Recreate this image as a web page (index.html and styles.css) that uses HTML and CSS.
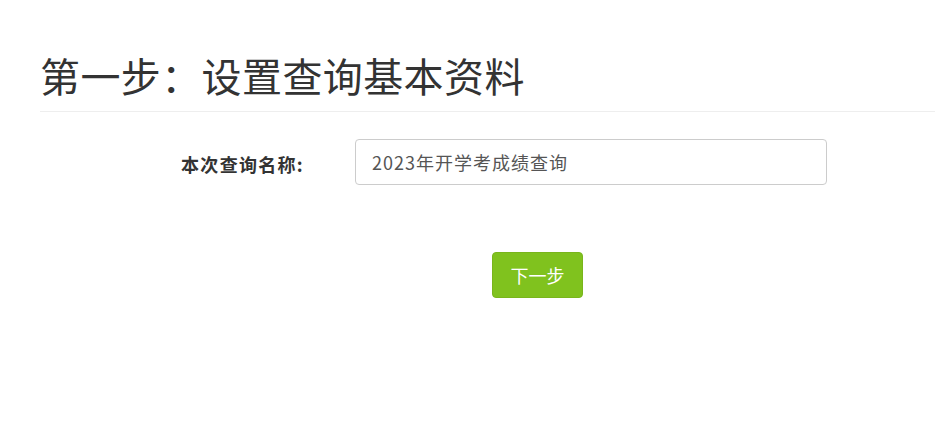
FILE: index.html
```html
<!DOCTYPE html>
<html lang="zh-CN">
<head>
<meta charset="utf-8">
<title>设置查询基本资料</title>
<link rel="stylesheet" href="styles.css">
</head>
<body>
<div class="page">
  <h1 class="title">第一步：设置查询基本资料</h1>
  <form class="form">
    <div class="row">
      <label class="label" for="name">本次查询名称:</label>
      <input class="input" id="name" type="text" value="2023年开学考成绩查询">
    </div>
    <div class="actions">
      <button type="button" class="btn">下一步</button>
    </div>
  </form>
</div>
</body>
</html>
```

FILE: styles.css
```css
html, body {
  margin: 0;
  padding: 0;
  background: #fff;
}
body {
  font-family: "Noto Sans CJK SC", "Noto Sans", sans-serif;
  color: #333;
}
.page {
  padding: 0 0 0 40px;
}
.title {
  margin: 0;
  padding-top: 46px;
  padding-bottom: 7px;
  font-size: 40px;
  font-weight: 400;
  line-height: 58px;
  letter-spacing: 0.4px;
  color: #333;
  border-bottom: 1px solid #eee;
}
.form {
  padding-top: 27px;
}
.row {
  display: flex;
  align-items: center;
}
.label {
  width: 264px;
  text-align: right;
  font-size: 18px;
  font-weight: 700;
  letter-spacing: 1.3px;
  color: #333;
  margin-right: 51px;
  padding-top: 4px;
}
.input {
  box-sizing: border-box;
  width: 472px;
  height: 46px;
  border: 1px solid #ccc;
  border-radius: 4px;
  padding: 0 16px;
  font-family: "Noto Sans CJK SC", "Noto Sans", sans-serif;
  font-size: 18px;
  letter-spacing: 1px;
  color: #555;
  outline: none;
}
.actions {
  padding-top: 67px;
  padding-left: 452px;
}
.btn {
  box-sizing: border-box;
  width: 91px;
  height: 46px;
  border: 1px solid #79b51c;
  border-radius: 4px;
  background: #80c21e;
  color: #fff;
  font-family: "Noto Sans CJK SC", "Noto Sans", sans-serif;
  font-size: 18px;
  padding: 0;
}
```
